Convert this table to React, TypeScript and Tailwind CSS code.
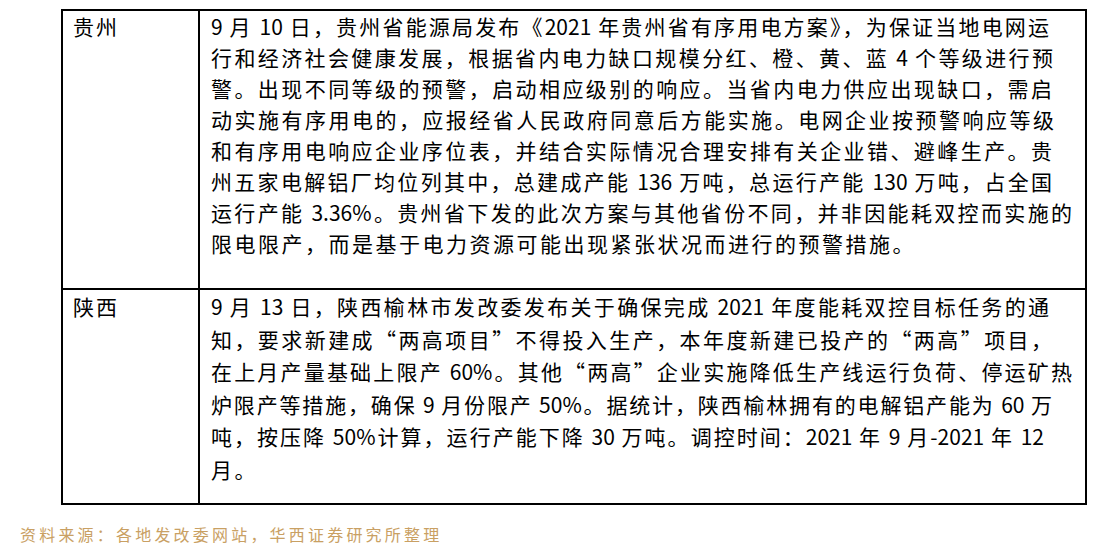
const cjk = "font-['Noto_Sans_CJK_SC','Noto_Sans',sans-serif]"

type Line = { t: string; w: string; last?: boolean }

const rows: { region: string; h: string; lh: string; lines: Line[] }[] = [
  {
    region: '贵州',
    h: 'h-[279px]',
    lh: 'leading-[31px]',
    lines: [
      { t: '9 月 10 日，贵州省能源局发布《2021 年贵州省有序用电方案》，为保证当地电网运', w: 'w-[838px]' },
      { t: '行和经济社会健康发展，根据省内电力缺口规模分红、橙、黄、蓝 4 个等级进行预', w: 'w-[842px]' },
      { t: '警。出现不同等级的预警，启动相应级别的响应。当省内电力供应出现缺口，需启', w: 'w-[841px]' },
      { t: '动实施有序用电的，应报经省人民政府同意后方能实施。电网企业按预警响应等级', w: 'w-[843px]' },
      { t: '和有序用电响应企业序位表，并结合实际情况合理安排有关企业错、避峰生产。贵', w: 'w-[841px]' },
      { t: '州五家电解铝厂均位列其中，总建成产能 136 万吨，总运行产能 130 万吨，占全国', w: 'w-[841px]' },
      { t: '运行产能 3.36%。贵州省下发的此次方案与其他省份不同，并非因能耗双控而实施的', w: 'w-[861px]' },
      { t: '限电限产，而是基于电力资源可能出现紧张状况而进行的预警措施。', w: 'w-[861px]', last: true },
    ],
  },
  {
    region: '陕西',
    h: 'h-[213px]',
    lh: 'leading-[32.5px]',
    lines: [
      { t: '9 月 13 日，陕西榆林市发改委发布关于确保完成 2021 年度能耗双控目标任务的通', w: 'w-[838px]' },
      { t: '知，要求新建成“两高项目”不得投入生产，本年度新建已投产的“两高”项目，', w: 'w-[841px]' },
      { t: '在上月产量基础上限产 60%。其他“两高”企业实施降低生产线运行负荷、停运矿热', w: 'w-[861px]' },
      { t: '炉限产等措施，确保 9 月份限产 50%。据统计，陕西榆林拥有的电解铝产能为 60 万', w: 'w-[841px]' },
      { t: '吨，按压降 50%计算，运行产能下降 30 万吨。调控时间：2021 年 9 月-2021 年 12', w: 'w-[833px]' },
      { t: '月。', w: 'w-[833px]', last: true },
    ],
  },
]

export default function App() {
  return (
    <div className={`w-[1106px] h-[554px] bg-white text-black overflow-hidden ${cjk}`}>
      {/* Table */}
      <div className="ml-[61px] mt-[9px] w-[1026px] border-2 border-black">
        {rows.map((row, i) => (
          <div key={row.region} className={`flex ${row.h} ${i === 0 ? 'border-b-2 border-black' : ''}`}>
            <div className={`w-[137px] shrink-0 border-r-2 border-black pl-[10px] text-[21px] tracking-[2px] ${row.lh}`}>
              {row.region}
            </div>
            <div className={`flex-1 pl-[11px] text-[21px] ${row.lh}`}>
              {row.lines.map((line, j) => (
                <div
                  key={j}
                  className={`${line.w} whitespace-pre ${
                    line.last ? 'text-left tracking-[2.5px]' : 'text-justify [text-align-last:justify]'
                  }`}
                >
                  {line.t}
                </div>
              ))}
            </div>
          </div>
        ))}
      </div>

      {/* Source note */}
      <div className="ml-[20px] mt-[17px] text-[16px] leading-[24px] tracking-[3.2px] text-[#c9a063]">
        资料来源：各地发改委网站，华西证券研究所整理
      </div>
    </div>
  )
}
